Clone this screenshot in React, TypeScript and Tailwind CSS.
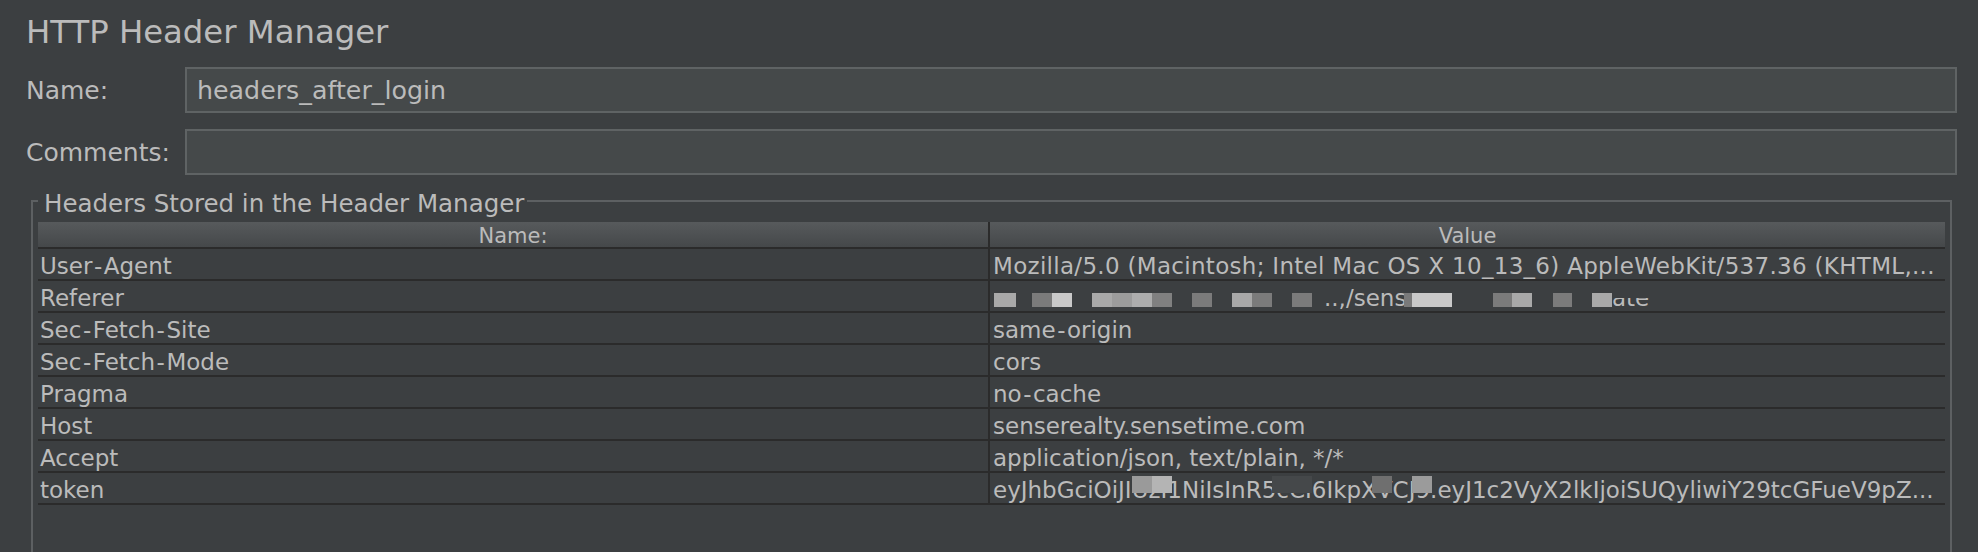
import React from 'react';

type Tile = { x: number; w: number; c: string };

const headers: { name: string; value: string; wide?: boolean }[] = [
  {
    name: 'User-Agent',
    value: 'Mozilla/5.0 (Macintosh; Intel Mac OS X 10_13_6) AppleWebKit/537.36 (KHTML,...',
    wide: true,
  },
  { name: 'Referer', value: '' },
  { name: 'Sec-Fetch-Site', value: 'same-origin' },
  { name: 'Sec-Fetch-Mode', value: 'cors' },
  { name: 'Pragma', value: 'no-cache' },
  { name: 'Host', value: 'senserealty.sensetime.com' },
  { name: 'Accept', value: 'application/json, text/plain, */*' },
  { name: 'token', value: 'eyJhbGciOiJIUzI1NiIsInR5cCI6IkpXVCJ9.eyJ1c2VyX2lkIjoiSUQyliwiY29tcGFueV9pZ...' },
];

// redaction mosaic, x measured from the left edge of the value cell
const refererTiles: Tile[] = [
  { x: 1, w: 22, c: '#a9a9a9' },
  { x: 39, w: 20, c: '#7b7b7b' },
  { x: 59, w: 20, c: '#c9c9c9' },
  { x: 99, w: 20, c: '#a9a9a9' },
  { x: 119, w: 20, c: '#9c9c9c' },
  { x: 139, w: 20, c: '#adadad' },
  { x: 159, w: 20, c: '#808080' },
  { x: 199, w: 20, c: '#7b7b7b' },
  { x: 239, w: 20, c: '#a8a8a8' },
  { x: 259, w: 20, c: '#7b7b7b' },
  { x: 299, w: 20, c: '#7b7b7b' },
];
const refererTiles2: Tile[] = [
  { x: 411, w: 8, c: '#7a7a7a' },
  { x: 419, w: 40, c: '#c9c9c9' },
  { x: 500, w: 19, c: '#7b7b7b' },
  { x: 519, w: 20, c: '#a9a9a9' },
  { x: 560, w: 19, c: '#7b7b7b' },
  { x: 599, w: 20, c: '#a9a9a9' },
];
const tokenTiles: Tile[] = [
  { x: 142, w: 20, c: '#9a9a9a' },
  { x: 162, w: 20, c: '#b4b4b4' },
  { x: 282, w: 40, c: '#45484a' },
  { x: 382, w: 20, c: '#6f6f6f' },
  { x: 422, w: 20, c: '#9b9b9b' },
];

// the Swing font draws a wider hyphen than DejaVu, pad it a little
function Dashed({ text }: { text: string }) {
  const parts = text.split('-');
  return (
    <>
      {parts.map((p, i) => (
        <React.Fragment key={i}>
          {i > 0 && <span className="mx-[1.5px]">-</span>}
          {p}
        </React.Fragment>
      ))}
    </>
  );
}

function Field({ label, value }: { label: string; value?: string }) {
  return (
    <div className="flex items-center">
      <div className="w-[159px] shrink-0 pt-[2px] text-[25px] leading-[44px]">{label}</div>
      <div className="h-[46px] flex-1 border-2 border-[#5f6364] bg-[#45494a] pl-[10px] pt-[2px] text-[25.3px] leading-[40px]">
        {value}
      </div>
    </div>
  );
}

function Mosaic({ tiles, top, h }: { tiles: Tile[]; top: number; h: number }) {
  return (
    <>
      {tiles.map((t) => (
        <span
          key={t.x}
          className="absolute"
          style={{ left: t.x, top, width: t.w, height: h, background: t.c }}
        />
      ))}
    </>
  );
}

function RefererValue() {
  return (
    <div className="relative h-full">
      <Mosaic tiles={refererTiles} top={8} h={14} />
      <span className="absolute left-[331px] top-0 leading-[26px]">..,/sense</span>
      <Mosaic tiles={refererTiles2} top={8} h={14} />
      <span className="absolute left-[619px] top-[13px] h-[9px] overflow-hidden leading-[26px]">
        <span className="block -mt-[13px]">ate</span>
      </span>
    </div>
  );
}

export default function App() {
  return (
    <div
      className="h-[552px] overflow-hidden bg-[#3c3f41] text-[#bbbbbb]"
      style={{ fontFamily: '"DejaVu Sans", "Liberation Sans", sans-serif' }}
    >
      <div className="pl-[26px] pr-[21px]">
        <h1 className="pt-[12px] text-[32.3px] font-normal leading-[40px]">HTTP Header Manager</h1>
        <div className="mt-[15px] flex flex-col gap-[16px]">
          <Field label="Name:" value="headers_after_login" />
          <Field label="Comments:" />
        </div>
      </div>

      <fieldset className="ml-[31px] mr-[26px] mt-[12px] h-[420px] border-2 border-[#5d6062] px-[5px] pt-[7px]">
        <legend className="pl-[6px] pr-[3px] pt-[6px] text-[24.5px] leading-[22px]">
          Headers Stored in the Header Manager
        </legend>

        <div className="grid grid-cols-[952px_1fr] text-[23px]">
          <div className="h-[27px] border-b-2 border-r-2 border-[#2b2b2b] bg-gradient-to-b from-[#575a5c] to-[#45484a] pt-[3px] text-center text-[21px] leading-[22px]">
            Name:
          </div>
          <div className="h-[27px] border-b-2 border-[#2b2b2b] bg-gradient-to-b from-[#575a5c] to-[#45484a] pt-[3px] text-center text-[21px] leading-[22px]">
            Value
          </div>

          {headers.map((h) => (
            <React.Fragment key={h.name}>
              <div className="h-[32px] overflow-hidden whitespace-nowrap border-b-2 border-r-2 border-[#2b2b2b] pl-[2px] pt-[4px] leading-[26px]">
                <Dashed text={h.name} />
              </div>
              <div
                className={
                  'relative h-[32px] overflow-hidden whitespace-nowrap border-b-2 border-[#2b2b2b] pl-[3px] pt-[4px] leading-[26px] ' +
                  (h.wide ? 'tracking-[0.3px]' : '')
                }
              >
                {h.name === 'Referer' ? <RefererValue /> : <Dashed text={h.value} />}
                {h.name === 'token' && <Mosaic tiles={tokenTiles} top={3} h={17} />}
              </div>
            </React.Fragment>
          ))}
        </div>
      </fieldset>
    </div>
  );
}
